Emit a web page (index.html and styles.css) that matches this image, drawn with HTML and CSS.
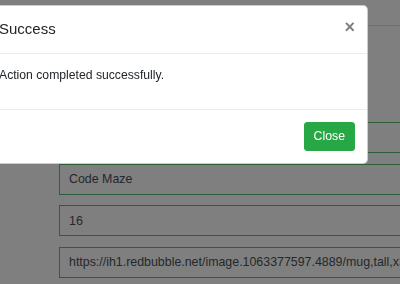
FILE: index.html
```html
<!DOCTYPE html>
<html lang="en">
<head>
    <meta charset="UTF-8">
    <meta name="viewport" content="width=device-width, initial-scale=1.0">
    <title>Edit Product</title>
    <link rel="stylesheet" href="styles.css">
</head>
<body>

    <div class="page">
        <div class="page-header"></div>

        <form class="product-form">
            <input class="form-control" type="text" value="1" readonly>
            <input class="form-control" type="text" value="Code Maze" readonly>
            <input class="form-control" type="text" value="16" readonly>
            <input class="form-control" type="text" value="https://ih1.redbubble.net/image.1063377597.4889/mug,tall,x334,right-pad,600x600,f8f8f8.jpg" readonly>
        </form>
    </div>

    <!-- modal over the page -->
    <div class="modal-backdrop"></div>
    <div class="modal">
        <div class="modal-header">
            <h5 class="modal-title">Success</h5>
            <button class="close" type="button">&times;</button>
        </div>
        <div class="modal-body">
            <p>Action completed successfully.</p>
        </div>
        <div class="modal-footer">
            <button class="btn-success" type="button">Close</button>
        </div>
    </div>

</body>
</html>
```

FILE: styles.css
```css
body {
    font-family: "Liberation Sans", Arial, sans-serif;
    font-size: 12px;
    color: #212529;
    background-color: #fff;
    margin: 0;
    padding: 0;
    overflow: hidden;
}
.page {
    padding-left: 59px;
}
.page-header {
    height: 25px;
    margin-left: -59px;
    border-bottom: 1px solid #dee2e6;
}
.product-form {
    display: flex;
    flex-direction: column;
    gap: 10.5px;
    padding-top: 96px;
}
.form-control {
    box-sizing: border-box;
    width: 380px;
    height: 31px;
    padding: 0 9px;
    border: 1px solid #5ebc72;
    border-radius: 0;
    font-family: "Liberation Sans", Arial, sans-serif;
    font-size: 12.4px;
    color: #495057;
    background-color: #fff;
    outline: none;
}
.modal-backdrop {
    position: fixed;
    top: 0;
    left: 0;
    right: 0;
    bottom: 0;
    background-color: rgba(0, 0, 0, 0.5);
}
.modal {
    position: fixed;
    top: 5px;
    left: -14px;
    width: 382px;
    box-sizing: border-box;
    background-color: #fff;
    border: 1px solid rgba(0, 0, 0, 0.2);
    border-radius: 5px;
}
.modal-header {
    display: flex;
    align-items: flex-start;
    justify-content: space-between;
    padding: 12px;
    border-bottom: 1px solid #e9ecef;
}
.modal-title {
    margin: 0;
    font-size: 15px;
    font-weight: 400;
    line-height: 22.5px;
}
.close {
    margin: -12px -12px -12px auto;
    padding: 12px;
    border: none;
    background: none;
    font-family: "Liberation Sans", Arial, sans-serif;
    font-size: 18px;
    font-weight: 700;
    line-height: 1;
    color: #000;
    opacity: 0.5;
    cursor: pointer;
}
.modal-body {
    padding: 12px;
}
.modal-body p {
    margin: 0 0 13px 0;
    font-size: 12.2px;
    line-height: 18px;
}
.modal-footer {
    display: flex;
    justify-content: flex-end;
    padding: 12px;
    border-top: 1px solid #e9ecef;
}
.btn-success {
    height: 29px;
    padding: 0 9px;
    border: 1px solid #28a745;
    border-radius: 3px;
    background-color: #28a745;
    color: #fff;
    font-family: "Liberation Sans", Arial, sans-serif;
    font-size: 12.3px;
    line-height: 1.5;
    cursor: pointer;
}
```
